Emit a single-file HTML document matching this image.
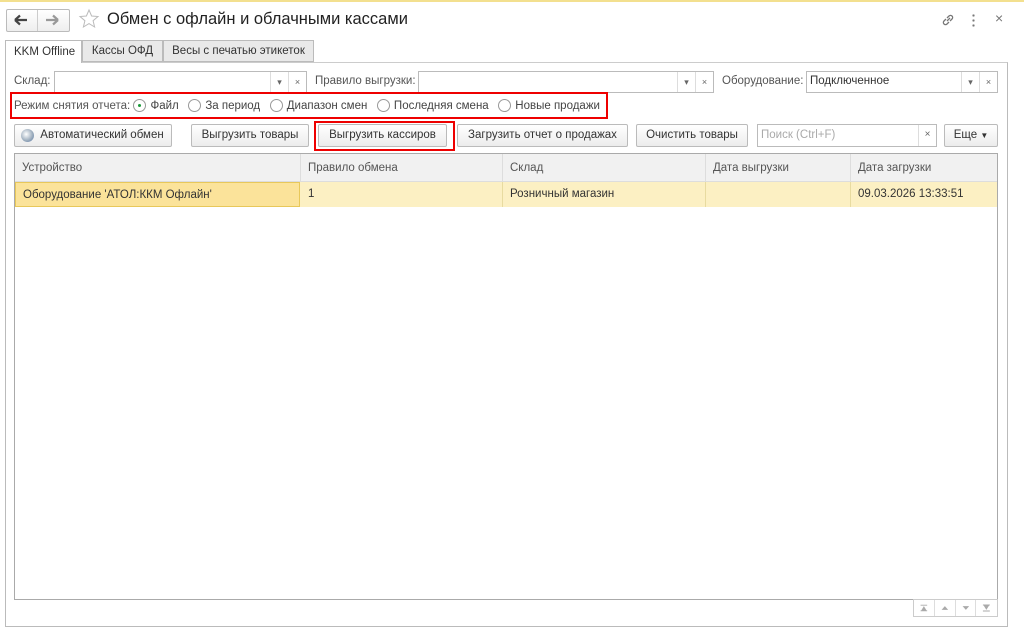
<!DOCTYPE html>
<html><head><meta charset="utf-8"><style>
*{box-sizing:border-box;margin:0;padding:0}
body{width:1024px;height:634px;background:#fff;font-family:"Liberation Sans",sans-serif;font-size:11.5px;color:#333;position:relative;overflow:hidden}
.a{position:absolute}
.btn{position:absolute;height:23px;border:1px solid #bbb;border-radius:2px;background:linear-gradient(#fff,#ececec);text-align:center;line-height:21px;color:#333;white-space:nowrap}
.inp{position:absolute;height:22px;border:1px solid #bbb;background:#fff}
.sq{position:absolute;top:0;width:18px;height:20px;border-left:1px solid #ddd;text-align:center;line-height:20px;font-size:9px;color:#666}
.lbl{position:absolute;color:#555;white-space:nowrap}
.rad{display:inline-block;width:13px;height:13px;border:1px solid #999;border-radius:50%;vertical-align:-3px;margin-right:4px;position:relative;background:#fff}
.th{position:absolute;top:0;height:28px;line-height:28px;padding-left:7px;color:#555;border-right:1px solid #ddd}
.td{position:absolute;top:28px;height:25px;line-height:25px;padding-left:7px;color:#333;border-right:1px solid #e8dba0}
</style></head><body>
<div class="a" style="left:0;top:0;width:1024px;height:2px;background:#f3e08f"></div>
<div class="a" style="left:6px;top:9px;width:64px;height:23px;border:1px solid #bbb;border-radius:2px;background:linear-gradient(#fff,#eee)"></div>
<div class="a" style="left:37px;top:10px;width:1px;height:21px;background:#ccc"></div>
<svg class="a" style="left:14px;top:14px" width="14" height="12" viewBox="0 0 14 12"><path d="M1 6h12M1 6l5-4.5M1 6l5 4.5" fill="none" stroke="#444" stroke-width="2.2"/></svg>
<svg class="a" style="left:45px;top:14px" width="14" height="12" viewBox="0 0 14 12"><path d="M1 6h12M13 6l-5-4.5M13 6l-5 4.5" fill="none" stroke="#999" stroke-width="2.2"/></svg>
<svg class="a" style="left:78px;top:8px" width="22" height="22" viewBox="0 0 22 22"><path d="M11 2l2.6 6 6.4.5-4.9 4.2 1.5 6.3L11 15.6 5.4 19l1.5-6.3L2 8.5 8.4 8z" fill="none" stroke="#bbb" stroke-width="1"/></svg>
<div class="a" style="left:107px;top:10px;font-size:16.5px;color:#222">Обмен с офлайн и облачными кассами</div>
<svg class="a" style="left:940px;top:12px" width="16" height="16" viewBox="0 0 16 16"><path d="M7 9l3-3M6 7l-2 2a2 2 0 0 0 3 3l2-2M10 9l2-2a2 2 0 0 0-3-3L7 6" fill="none" stroke="#777" stroke-width="1.3"/></svg>
<div class="a" style="left:972px;top:13px;width:3px;height:14px;background:radial-gradient(circle,#777 1px,transparent 1.3px) 0 0/3px 5px"></div>
<div class="a" style="left:995px;top:10px;font-size:14px;color:#777">×</div>
<!-- tabs -->
<div class="a" style="left:5px;top:40px;width:77px;height:23px;border:1px solid #bbb;border-bottom:none;background:#fff;line-height:22px;padding-left:8px;z-index:2">KKM Offline</div>
<div class="a" style="left:82px;top:40px;width:81px;height:22px;border:1px solid #bbb;background:#e9e9e9;line-height:21px;text-align:center">Кассы ОФД</div>
<div class="a" style="left:163px;top:40px;width:151px;height:22px;border:1px solid #bbb;background:#e9e9e9;line-height:21px;text-align:center">Весы с печатью этикеток</div>
<div class="a" style="left:5px;top:62px;width:1003px;height:565px;border:1px solid #bbb;border-top:1px solid #ccc"></div>
<!-- fields -->
<div class="lbl" style="left:14px;top:75px">Склад:</div>
<div class="inp" style="left:54px;top:71px;width:253px"><div class="sq" style="left:215px">▾</div><div class="sq" style="left:233px">×</div></div>
<div class="lbl" style="left:315px;top:75px">Правило выгрузки:</div>
<div class="inp" style="left:418px;top:71px;width:296px"><div class="sq" style="left:258px">▾</div><div class="sq" style="left:276px">×</div></div>
<div class="lbl" style="left:722px;top:75px">Оборудование:</div>
<div class="inp" style="left:806px;top:71px;width:192px"><div class="a" style="left:3px;top:3px;color:#333">Подключенное</div><div class="sq" style="left:154px">▾</div><div class="sq" style="left:172px">×</div></div>
<!-- radios -->
<div class="a" style="left:10px;top:92px;width:598px;height:27px;border:2px solid #e00"></div>
<div class="a" style="left:14px;top:99px;color:#444;white-space:nowrap">
<span style="color:#555">Режим снятия отчета:</span>&nbsp;<span class="rad"><span style="position:absolute;left:4px;top:4px;width:3px;height:3px;border-radius:50%;background:#1a9a3a"></span></span>Файл&nbsp;&nbsp;&nbsp;<span class="rad"></span>За период&nbsp;&nbsp;&nbsp;<span class="rad"></span>Диапазон смен&nbsp;&nbsp;&nbsp;<span class="rad"></span>Последняя смена&nbsp;&nbsp;&nbsp;<span class="rad"></span>Новые продажи</div>
<!-- buttons -->
<div class="btn" style="left:14px;top:124px;width:158px;padding-left:18px">Автоматический обмен</div>
<div class="a" style="left:21px;top:129px;width:13px;height:13px;border-radius:50%;background:radial-gradient(circle at 40% 40%,#fff,#9ab 60%,#57a);"></div>
<div class="btn" style="left:191px;top:124px;width:118px">Выгрузить товары</div>
<div class="a" style="left:314px;top:121px;width:141px;height:30px;border:2px solid #e00"></div>
<div class="btn" style="left:318px;top:124px;width:129px">Выгрузить кассиров</div>
<div class="btn" style="left:457px;top:124px;width:171px">Загрузить отчет о продажах</div>
<div class="btn" style="left:636px;top:124px;width:112px">Очистить товары</div>
<div class="inp" style="left:757px;top:124px;width:180px;height:23px"><div class="a" style="left:3px;top:4px;color:#aaa">Поиск (Ctrl+F)</div><div class="sq" style="left:160px;height:21px;font-size:10px">×</div></div>
<div class="btn" style="left:944px;top:124px;width:54px">Еще <span style="font-size:8px">▼</span></div>
<!-- table -->
<div class="a" style="left:14px;top:153px;width:984px;height:447px;border:1px solid #aaa">
<div class="a" style="left:0;top:0;width:982px;height:28px;background:#f1f1f1;border-bottom:1px solid #ddd"></div>
<div class="th" style="left:0;width:286px">Устройство</div>
<div class="th" style="left:286px;width:202px">Правило обмена</div>
<div class="th" style="left:488px;width:203px">Склад</div>
<div class="th" style="left:691px;width:145px">Дата выгрузки</div>
<div class="th" style="left:836px;width:146px;border:none">Дата загрузки</div>
<div class="a" style="left:0;top:28px;width:982px;height:25px;background:#fcf0c3"></div>
<div class="td" style="left:0;width:285px;background:#fbe39a;border:1px solid #e8c85a">Оборудование 'АТОЛ:ККМ Офлайн'</div>
<div class="td" style="left:286px;width:202px">1</div>
<div class="td" style="left:488px;width:203px">Розничный магазин</div>
<div class="td" style="left:691px;width:145px"></div>
<div class="td" style="left:836px;width:146px;border:none">09.03.2026 13:33:51</div>
</div>
<div class="a" style="left:913px;top:599px;width:85px;height:18px;border:1px solid #ccc;display:flex">
<svg width="21" height="16" viewBox="0 0 21 16" style="border-right:1px solid #ddd"><path d="M7 5h7M8 11l2.5-4 2.5 4z M7 11h7" fill="#aaa" stroke="#aaa" stroke-width="1"/></svg>
<svg width="21" height="16" viewBox="0 0 21 16" style="border-right:1px solid #ddd"><path d="M7 10l3.5-4 3.5 4z" fill="#aaa"/></svg>
<svg width="21" height="16" viewBox="0 0 21 16" style="border-right:1px solid #ddd"><path d="M7 6l3.5 4 3.5-4z" fill="#aaa"/></svg>
<svg width="21" height="16" viewBox="0 0 21 16"><path d="M7 5h7M8 5l2.5 4 2.5-4z M7 11h7" fill="#aaa" stroke="#aaa" stroke-width="1"/></svg>
</div>
</body></html>
